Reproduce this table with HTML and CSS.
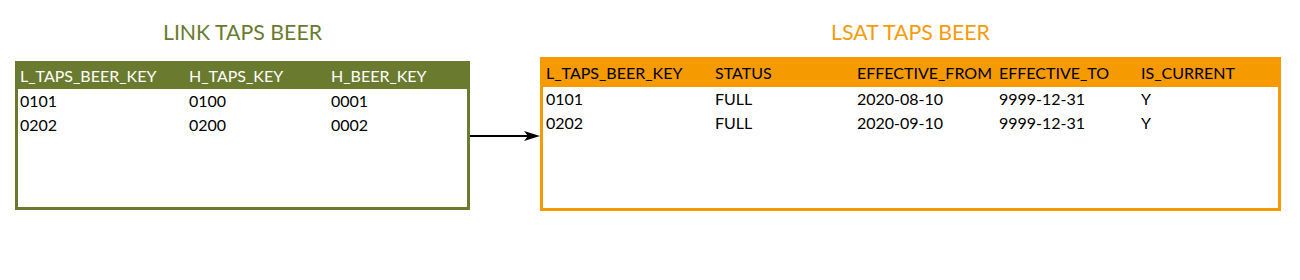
FILE: index.html
```html
<!DOCTYPE html>
<html lang="en">
<head>
<meta charset="utf-8">
<title>Link and satellite: taps beer</title>
<link rel="stylesheet" href="styles.css">
</head>
<body>
<div class="diagram">
  <h2 class="title title-link">LINK TAPS BEER</h2>
  <div></div>
  <h2 class="title title-sat">LSAT TAPS BEER</h2>

  <div class="box box-link">
    <div class="row head">
      <span>L_TAPS_BEER_KEY</span><span>H_TAPS_KEY</span><span>H_BEER_KEY</span>
    </div>
    <div class="row">
      <span>0101</span><span>0100</span><span>0001</span>
    </div>
    <div class="row">
      <span>0202</span><span>0200</span><span>0002</span>
    </div>
  </div>

  <div class="connector">
    <svg width="70" height="12" viewBox="0 0 70 12">
      <line x1="0" y1="6" x2="58" y2="6" stroke="#000" stroke-width="2"/>
      <path d="M54 1 L70 6 L54 11 L58 6 Z" fill="#000"/>
    </svg>
  </div>

  <div class="box box-sat">
    <div class="row head">
      <span>L_TAPS_BEER_KEY</span><span>STATUS</span><span>EFFECTIVE_FROM</span><span>EFFECTIVE_TO</span><span>IS_CURRENT</span>
    </div>
    <div class="row">
      <span>0101</span><span>FULL</span><span>2020-08-10</span><span>9999-12-31</span><span>Y</span>
    </div>
    <div class="row">
      <span>0202</span><span>FULL</span><span>2020-09-10</span><span>9999-12-31</span><span>Y</span>
    </div>
  </div>
</div>
</body>
</html>
```
FILE: styles.css
```css
html, body {
  margin: 0;
  padding: 0;
  background: #ffffff;
}

body {
  font-family: Lato, "Open Sans", "Liberation Sans", sans-serif;
  color: #000000;
}

.diagram {
  display: grid;
  grid-template-columns: 455px 70px 741px;
  grid-template-rows: 57px 154px;
  margin-left: 15px;
}

.title {
  margin: 0;
  padding-top: 20px;
  font-size: 21.3px;
  font-weight: 400;
  line-height: 24px;
  text-align: center;
}

.title-link { color: #6a7b2f; }
.title-sat  { color: #f59b0c; }

.box {
  box-sizing: border-box;
  border: 3px solid;
  background: #ffffff;
  font-size: 16px;
}

.box-link {
  border-color: #6a7b2f;
  height: 149px;
  margin-top: 4px;
}

.box-sat {
  border-color: #f59a00;
  height: 154px;
}

.row {
  display: grid;
  height: 24px;
  line-height: 24px;
  white-space: nowrap;
}

.box-link .row {
  grid-template-columns: 169px 142px 1fr;
  padding-left: 2px;
}

.box-sat .row {
  grid-template-columns: 169px 142px 142px 142px 1fr;
  padding-left: 3px;
}

.box-link .head {
  background: #6a7b2f;
  color: #ffffff;
  height: 25px;
  line-height: 23px;
}

.box-sat .head {
  background: #f59a00;
  color: #000000;
  height: 27px;
  line-height: 26px;
}

.connector {
  display: flex;
  align-items: center;
  margin-top: 4px;
  height: 149px;
}

.connector svg {
  display: block;
}
```
